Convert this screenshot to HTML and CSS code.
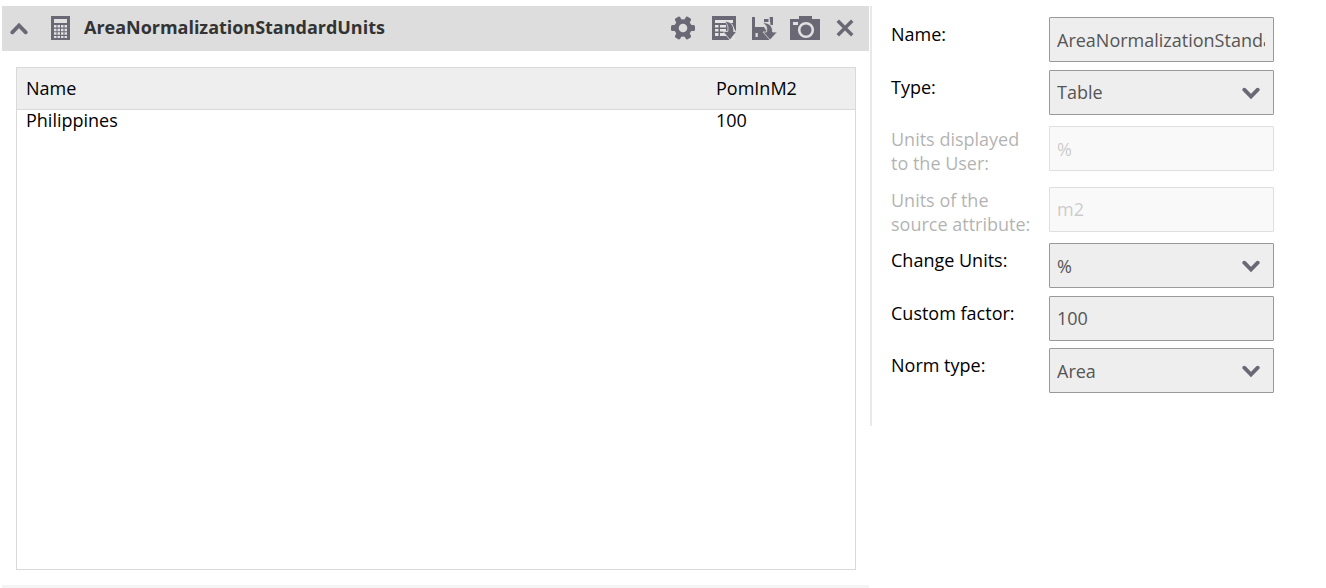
FILE: index.html
```html
<!DOCTYPE html>
<html lang="en">
<head>
<meta charset="utf-8">
<title>AreaNormalizationStandardUnits</title>
<link rel="stylesheet" href="styles.css">
</head>
<body>
<div class="page">
  <section class="main">
    <header class="bar">
      <svg class="icon collapse" width="18" height="13" viewBox="0 0 18 13"><path d="M2.3 10.3 9 3.5l6.7 6.8" fill="none" stroke="#6a6875" stroke-width="3.8" stroke-linecap="round"/></svg>
      <svg class="icon calc" width="19" height="24" viewBox="0 0 19 24"><path fill="#6a6875" d="M0 0h19v24H0z"/><path fill="#e0e0e0" d="M3 3h13v4H3zM3 9h2.500v2.500H3zm3.500 0H9v2.500H6.500zM10 9h2.500v2.500H10zm3.500 0H16v2.500h-2.500zM3 12.700h2.500v2.500H3zm3.500 0H9v2.500H6.500zm3.500 0h2.500v2.500H10zm3.500 0H16v2.500h-2.500zM3 16.300h2.500v2.500H3zm3.500 0H9v2.500H6.500zm3.500 0h2.500v2.500H10zm3.500 0H16v2.500h-2.500zM3 20h2.500v2H3zm3.500 0H9v2H6.500zm3.500 0h2.500v2H10zm3.500 0H16v2h-2.500z"/></svg>
      <h1 class="title">AreaNormalizationStandardUnits</h1>
      <div class="tools">
        <svg class="icon" width="24" height="24" viewBox="0 0 24 24"><g fill="#6a6875"><circle cx="12" cy="12" r="8.800"/><rect x="0" y="9" width="24" height="6" rx="1.500"/><rect x="0" y="9" width="24" height="6" rx="1.500" transform="rotate(60 12 12)"/><rect x="0" y="9" width="24" height="6" rx="1.500" transform="rotate(120 12 12)"/></g><circle cx="12" cy="12" r="4.300" fill="#ddd"/></svg>
        <svg class="icon export" width="25" height="24" viewBox="0 0 25 24"><path fill="#6a6875" d="M0 0h24v14l-6 10H0z"/><path fill="#e4e4e4" d="M3 4h18v3H3zM3 9h3.500v2.500H3zm5 0h6v2.500H8zM3 13h3.500v2.500H3zm5 0h6v2.500H8zM3 17h3.500v3H3zm5 0h4l3 3H8zM20 8l3 6v10h-6z"/><path fill="#6a6875" stroke="#e4e4e4" stroke-width=".8" d="M12.500 5.300c6.800 0 9.500 4.500 9.200 10.200h3L18 24l-6.800-8.500h4.500c.8-4.500 0-7.500-3.200-10.200z"/></svg>
        <svg class="icon save" width="26" height="24" viewBox="0 0 26 24"><path fill="#6a6875" d="M0 1h3v10h9l5 8v5H0zM12 3h4.500v3H12zM17.500 1H21v8h-2.500z"/><path fill="#ddd" d="M3.500 17h2.300v4H3.500z"/><path fill="#6a6875" stroke="#ddd" stroke-width=".8" d="M10.500 6.500c7.300.2 10.300 4 10 9.500h4.800L18 24l-7-8h3.500c.8-4.500-.2-7-4-9.500z"/></svg>
        <svg class="icon camera" width="30" height="24" viewBox="0 0 30 24"><path fill="#6a6875" d="M0 3h9V0h13v3h8v21H0z"/><path fill="#e0e0e0" d="M3 6h5v3H3z"/><circle cx="16" cy="14" r="6.800" fill="none" stroke="#e0e0e0" stroke-width="2.600"/></svg>
        <svg class="icon close" width="18" height="18" viewBox="0 0 18 18"><path d="m3 3 12 12m0-12L3 15" fill="none" stroke="#6a6875" stroke-width="3.500" stroke-linecap="square"/></svg>
      </div>
    </header>
    <div class="grid">
      <div class="grid-row grid-head"><span>Name</span><span>PomInM2</span></div>
      <div class="grid-row"><span>Philippines</span><span>100</span></div>
    </div>
    <div class="next-bar"></div>
  </section>
  <form class="settings">
    <div class="row"><label class="label">Name:</label><div class="field"><span class="value">AreaNormalizationStandardUnits</span></div></div>
    <div class="row raised"><label class="label">Type:</label><div class="field"><span class="value">Table</span><svg class="chevron" width="18" height="13" viewBox="0 0 18 13"><path d="M2.300 2.700 9 9.500l6.700-6.800"/></svg></div></div>
    <div class="row disabled displayed"><label class="label">Units displayed to the User:</label><div class="field"><span class="value">%</span></div></div>
    <div class="row disabled raised source"><label class="label">Units of the source attribute:</label><div class="field"><span class="value">m2</span></div></div>
    <div class="row"><label class="label">Change Units:</label><div class="field"><span class="value">%</span><svg class="chevron" width="18" height="13" viewBox="0 0 18 13"><path d="M2.300 2.700 9 9.500l6.700-6.800"/></svg></div></div>
    <div class="row raised factor"><label class="label">Custom factor:</label><div class="field"><span class="value">100</span></div></div>
    <div class="row"><label class="label">Norm type:</label><div class="field"><span class="value">Area</span><svg class="chevron" width="18" height="13" viewBox="0 0 18 13"><path d="M2.300 2.700 9 9.500l6.700-6.800"/></svg></div></div>
  </form>
</div>
</body>
</html>
```
FILE: styles.css
```css
* { box-sizing: border-box; }
body {
  margin: 0;
  background: #fff;
  color: #000;
  font: 18px/24px "Open Sans", sans-serif;
}
.page {
  display: flex;
  align-items: flex-start;
  height: 588px;
  padding: 6px 0 0 2px;
  overflow: hidden;
}
.main { width: 867px; margin-right: 1px; }
.icon, .chevron { display: block; flex: none; }
.bar {
  display: flex;
  align-items: center;
  height: 45px;
  padding: 0 15px 1px 8px;
  background: #ddd;
}
.calc { margin: 0 14px 0 23px; }
.title {
  margin: 0 auto 2px 0;
  color: #333;
  font-size: 18px;
  line-height: 24px;
  font-weight: 700;
  letter-spacing: -.02px;
}
.tools { display: flex; align-items: center; }
.export { margin-left: 17px; }
.save { margin-left: 15px; }
.camera { margin-left: 12px; }
.close { margin-left: 16px; }
.grid {
  width: 840px;
  height: 503px;
  margin: 16px 0 15px 14px;
  border: 1px solid #d9d9d9;
}
.grid-row {
  display: grid;
  grid-template-columns: 690px 1fr;
  padding: 0 9px;
  line-height: 20px;
}
.grid-head {
  height: 42px;
  background: #eee;
  border-bottom: 1px solid #d9d9d9;
  line-height: 41px;
}
.next-bar { height: 10px; background: #f4f4f4; }
.settings {
  width: 420px;
  height: 420px;
  padding: 11px 0 0 19px;
  border-left: 2px solid #ebe8ea;
}
.row { display: flex; height: 45px; margin-bottom: 8px; }
.label { width: 158px; padding: 5px 16px 0 0; }
.field {
  display: flex;
  align-items: center;
  width: 225px;
  height: 45px;
  padding: 1px 8px 0 7px;
  border: 1px solid #999;
  border-radius: 1px;
  background: #eee;
  color: #555;
}
.value { flex: 1; overflow: hidden; white-space: nowrap; }
.raised .value { padding-bottom: 2px; }
.chevron { margin-right: 5px; }
.chevron path {
  fill: none;
  stroke: #6a6875;
  stroke-width: 3.8;
  stroke-linecap: round;
}
.disabled { opacity: .3; }
.disabled .label { padding-top: 1px; }
.displayed { margin: 11px 0 16px; }
.source { margin-bottom: 11px; }
.factor { margin-bottom: 7px; }
```
